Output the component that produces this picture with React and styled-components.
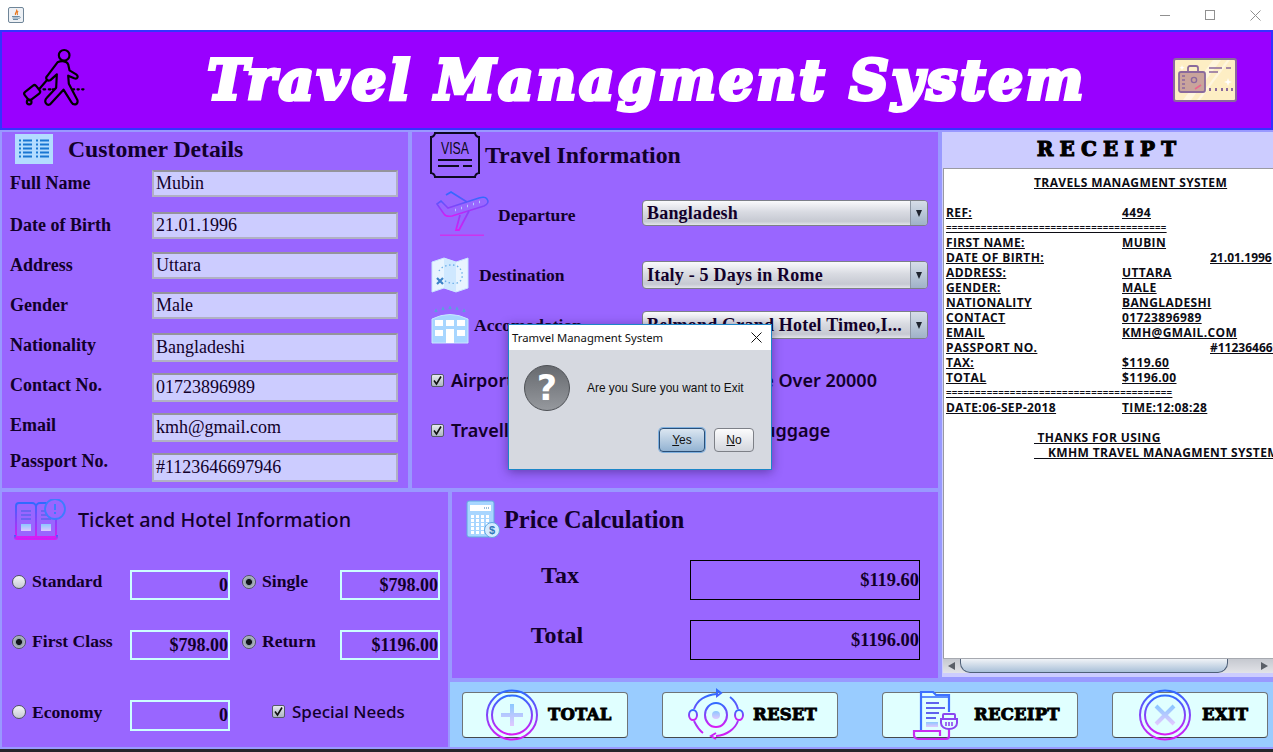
import React from 'react';
import styled, { createGlobalStyle } from 'styled-components';

const GlobalStyle = createGlobalStyle`
  html, body { margin: 0; padding: 0; background: #26262b; }
  #root { width: 1273px; height: 752px; overflow: hidden; }
`;

const serif = `"Liberation Serif", "Times New Roman", serif`;
const sans = `"Noto Sans", "Open Sans", sans-serif`;

const Screen = styled.div`
  position: relative;
  width: 1273px;
  height: 752px;
  background: #26262b;
  overflow: hidden;
  color: #12002a;
`;

const TitleBar = styled.div`
  height: 30px;
  background: #fff;
  display: flex;
  align-items: center;
  padding-left: 8px;
  box-sizing: border-box;
`;

const WinControls = styled.div`
  margin-left: auto;
  display: flex;
  align-items: center;
  gap: 34px;
  padding-right: 12px;
`;

const Header = styled.div`
  height: 100px;
  box-sizing: border-box;
  background: #9900ff;
  border: 2px solid #3333ff;
  display: flex;
  align-items: center;
  padding: 0 34px 0 18px;
`;

const BigTitle = styled.div`
  flex: 1;
  text-align: center;
  font: italic 700 54px "DejaVu Serif", serif;
  letter-spacing: 3.3px;
  color: #fff;
  -webkit-text-stroke: 4px #fff;
  white-space: nowrap;
  padding: 0 0 0 34px;
`;

const Body = styled.div`
  display: grid;
  grid-template-columns: 410px 40px 490px 333px;
  grid-template-rows: 360px 190px 69px;
`;

const Panel = styled.section`
  box-sizing: border-box;
  background: #9966ff;
  border: 2px solid #9999ff;
  grid-column: ${p => p.$col};
  grid-row: ${p => p.$row};
  min-width: 0;
`;

const Row = styled.div`
  display: flex;
  align-items: center;
  box-sizing: border-box;
  height: ${p => p.$h}px;
  margin-top: ${p => p.$top || 0}px;
  padding-left: ${p => p.$left || 0}px;
  padding-bottom: ${p => p.$bottom || 0}px;
`;

const SectionTitle = styled.h2`
  margin: 0 0 0 ${p => p.$gap || 0}px;
  font: 700 ${p => p.$size || 24}px ${serif};
  color: #12002a;
  white-space: nowrap;
`;

const SansTitle = styled.h2`
  margin: 0 0 2px 10px;
  font: 500 19.8px ${sans};
  color: #12002a;
  white-space: nowrap;
`;

const FieldLabel = styled.div`
  width: 142px;
  flex: none;
  font: 700 18px ${serif};
  padding-bottom: ${p => p.$lift || 0}px;
  white-space: nowrap;
`;

const FieldValue = styled.div`
  width: 246px;
  height: ${p => p.$h}px;
  box-sizing: border-box;
  background: #ccccff;
  border: 2px solid #b0b0c4;
  border-top-color: #94949c;
  font: 400 18px ${serif};
  line-height: ${p => p.$h - 4}px;
  padding-left: 2px;
  color: #12002a;
  white-space: nowrap;
`;

const TravelLabel = styled.div`
  font: 700 17.5px ${serif};
  margin-left: ${p => p.$gap}px;
  width: ${p => p.$w}px;
  flex: none;
  white-space: nowrap;
`;

const Select = styled.div`
  width: 286px;
  height: ${p => p.$h}px;
  margin-bottom: ${p => p.$lift || 0}px;
  box-sizing: border-box;
  border: 1px solid #7c7f88;
  border-radius: 4px;
  background: linear-gradient(#fafafc 0%, #d9dbe2 45%, #c6c9d2 85%, #e2e4ea 100%);
  display: flex;
  align-items: center;
  overflow: hidden;
  flex: none;
`;

const SelectText = styled.div`
  flex: 1;
  font: 700 18px ${serif};
  letter-spacing: 0.2px;
  padding-left: 4px;
  white-space: nowrap;
  color: #12002a;
`;

const SelectArrow = styled.div`
  width: 16px;
  align-self: stretch;
  background: linear-gradient(#d6dde8, #9fb2c8);
  border-left: 1px solid #8d97a6;
  display: flex;
  align-items: center;
  justify-content: center;
  &::after {
    content: '';
    border-left: 3.5px solid transparent;
    border-right: 3.5px solid transparent;
    border-top: 7px solid #1e2430;
  }
`;

const CheckRow = styled.div`
  display: grid;
  grid-template-columns: 253px auto;
  align-items: center;
  height: 20px;
  margin-top: ${p => p.$top}px;
  padding-left: 19px;
`;

const CheckItem = styled.label`
  display: flex;
  align-items: center;
  gap: 7px;
  font: 600 18px ${sans};
  color: #12002a;
  white-space: nowrap;
`;

const CheckBox = styled.span`
  width: 13px;
  height: 13px;
  box-sizing: border-box;
  border: 1px solid #555c68;
  border-radius: 2px;
  background: linear-gradient(#e6e9ef, #aeb6c3);
  display: flex;
  align-items: center;
  justify-content: center;
  flex: none;
`;

const TicketHead = styled.div`
  display: flex;
  align-items: center;
  height: 40px;
  margin-top: 8px;
  padding-left: 12px;
`;

const TicketRow = styled.div`
  display: grid;
  grid-template-columns: 118px 100px 12px 98px 100px;
  height: 30px;
  margin-top: ${p => p.$top}px;
  padding-left: 10px;
`;

const RadioItem = styled.div`
  display: flex;
  align-items: center;
  gap: 6px;
  font: 700 17.6px ${serif};
  padding-bottom: 7px;
  padding-left: ${p => p.$indent || 0}px;
  white-space: nowrap;
  grid-column: ${p => p.$col};
`;

const Radio = styled.span`
  width: 14px;
  height: 14px;
  box-sizing: border-box;
  border-radius: 50%;
  border: 1px solid #4e5560;
  background: ${p => (p.$on ? 'radial-gradient(circle, #10131a 0 2.6px, #8f99a8 3.4px, #dfe3ea 100%)' : 'linear-gradient(#f4f5f8, #c6cad2)')};
  flex: none;
`;

const AmountBox = styled.div`
  box-sizing: border-box;
  border: 2px solid #ccffff;
  font: 700 18px ${serif};
  text-align: right;
  padding-top: 3px;
  line-height: 21px;
  grid-column: ${p => p.$col};
  white-space: nowrap;
`;

const NeedsCell = styled.div`
  grid-column: 3 / 6;
  display: flex;
  align-items: center;
  padding-left: 42px;
  padding-bottom: 8px;
`;

const NeedsText = styled(CheckItem)`
  font-size: 17px;
  font-weight: 500;
`;

const PriceRow = styled.div`
  display: flex;
  height: 40px;
  margin-top: ${p => p.$top}px;
`;

const PriceLabel = styled.div`
  width: ${p => p.$w}px;
  flex: none;
  text-align: center;
  font: 700 24px ${serif};
  padding-bottom: 10px;
  line-height: 30px;
`;

const PriceBox = styled.div`
  width: 230px;
  box-sizing: border-box;
  border: 1px solid #000;
  font: 700 18.4px ${serif};
  text-align: right;
  line-height: 38px;
  margin-left: ${p => p.$gap}px;
`;

const ReceiptPanel = styled(Panel)`
  border-right: 0;
  border-bottom: 3px solid #9999ff;
  background: #ccccff;
  display: flex;
  flex-direction: column;
`;

const ReceiptHead = styled.div`
  height: 36px;
  box-sizing: border-box;
  flex: none;
  display: flex;
  align-items: center;
  justify-content: center;
  font: 900 20px "DejaVu Serif", serif;
  letter-spacing: 6.2px;
  color: #000;
  -webkit-text-stroke: 1.1px #000;
  padding: 0 0 3px 4px;
`;

const ReceiptPaper = styled.div`
  flex: 1;
  min-height: 0;
  margin-left: 1px;
  background: #fff;
  border-top: 1px solid #9a9aa2;
  border-left: 1px solid #9a9aa2;
  padding: 6px 0 0 2px;
  overflow: hidden;
  font: 700 12px/15px "Open Sans", sans-serif;
  letter-spacing: 0.38px;
  color: #0c0c14;
`;

const ReceiptLine = styled.div`
  display: flex;
  height: 15px;
  white-space: pre;
`;

const ReceiptCell = styled.span`
  flex: none;
  width: ${p => p.$w || 'auto'};
  margin-left: ${p => p.$gap || 0}px;
  & > u {
    text-decoration: underline;
    text-decoration-thickness: 1px;
    text-underline-offset: 1px;
  }
`;

const ReceiptRule = styled(ReceiptCell)`
  font-size: 9.6px;
  letter-spacing: 0.32px;
`;

const ReceiptFar = styled(ReceiptCell)`
  letter-spacing: 0;
`;

const ScrollBar = styled.div`
  height: 15px;
  margin: 0 0 4px 1px;
  flex: none;
  display: flex;
  align-items: center;
  background: linear-gradient(#c6c9d0, #e2e3e8);
  border-top: 1px solid #a6a9b0;
  box-sizing: border-box;
`;

const ScrollArrow = styled.span`
  width: 17px;
  flex: none;
  display: flex;
  justify-content: center;
  margin-left: ${p => (p.$right ? 'auto' : '0')};
  &::after {
    content: '';
    border-top: 4px solid transparent;
    border-bottom: 4px solid transparent;
    ${p => (p.$right ? 'border-left: 7px solid #5a5f68;' : 'border-right: 7px solid #5a5f68;')}
  }
`;

const ScrollThumb = styled.div`
  width: 268px;
  height: 14px;
  box-sizing: border-box;
  border: 1px solid #4f6078;
  border-top: 0;
  border-radius: 0 0 10px 10px;
  background: linear-gradient(#f0f3f7, #a9c0d8);
`;

const ButtonBar = styled.div`
  grid-column: 3 / 5;
  grid-row: 3;
  box-sizing: border-box;
  background: #99ccff;
  border-top: 2px solid #9999ff;
  border-bottom: 2px solid #9999ff;
  display: flex;
  align-items: center;
  padding: 0 0 0 12px;
`;

const ActionButton = styled.button`
  width: ${p => p.$w}px;
  height: 46px;
  margin-left: ${p => p.$gap || 0}px;
  padding: 0 0 0 ${p => p.$pad}px;
  box-sizing: border-box;
  background: #e0ffff;
  border: 1px solid #6e7478;
  border-bottom-color: #44484c;
  border-radius: 4px;
  display: flex;
  align-items: center;
  gap: ${p => p.$iconGap}px;
  font: 900 16.5px "DejaVu Serif", serif;
  letter-spacing: 0.2px;
  color: #000;
  -webkit-text-stroke: 0.9px #000;
  flex: none;
`;

const ButtonIcon = styled.svg`
  flex: none;
  margin: -2px 0;
  overflow: visible;
`;

const TravellerSvg = styled.svg`
  flex: none;
  margin-bottom: 6px;
`;

const Dialog = styled.div`
  position: absolute;
  left: 508px;
  top: 324px;
  width: 264px;
  height: 146px;
  box-sizing: border-box;
  border: 1px solid #1c86c8;
  background: #d6d9e0;
  box-shadow: 0 2px 10px rgba(30, 10, 70, 0.45);
  display: flex;
  flex-direction: column;
`;

const DialogTitle = styled.div`
  height: 25px;
  flex: none;
  background: #fff;
  display: flex;
  align-items: center;
  justify-content: space-between;
  padding: 0 9px 0 3px;
  font: 400 11.3px ${sans};
  color: #111;
  white-space: nowrap;
`;

const DialogBody = styled.div`
  display: flex;
  align-items: center;
  padding: 15px 0 0 15px;
  gap: 17px;
  font: 400 11.9px "Liberation Sans", Arial, sans-serif;
  color: #111;
`;

const DialogActions = styled.div`
  display: flex;
  justify-content: flex-end;
  gap: 9px;
  padding: 17px 17px 0 0;
`;

const DialogButton = styled.button`
  width: ${p => p.$w}px;
  height: 24px;
  box-sizing: border-box;
  padding: 0;
  border-radius: 4px;
  font: 400 12px "Liberation Sans", Arial, sans-serif;
  color: #111;
  border: 1px solid ${p => (p.$primary ? '#2a4f78' : '#7d8087')};
  background: ${p => (p.$primary ? 'linear-gradient(#dbe6f1, #93b3d2)' : 'linear-gradient(#fcfcfd, #d3d6dd)')};
  box-shadow: ${p => (p.$primary ? '0 0 0 1px #7fb0df' : 'none')};
  & > u { text-decoration: underline; }
`;

const Grad = ({ id }) => (
  <defs>
    <linearGradient id={id} x1="0" y1="0" x2="0" y2="1">
      <stop offset="0" stopColor="#2f6bff" />
      <stop offset="1" stopColor="#d81cf4" />
    </linearGradient>
    <linearGradient id={id + 'p'} x1="0" y1="0" x2="0" y2="1">
      <stop offset="0" stopColor="#8cc8ff" />
      <stop offset="1" stopColor="#e0c8ff" />
    </linearGradient>
  </defs>
);

const JavaIcon = () => (
  <svg width="16" height="16" viewBox="0 0 16 16">
    <rect x="0.5" y="0.5" width="15" height="15" rx="1.5" fill="#eef1f5" stroke="#6f8598" />
    <path d="M8.5 2.5C10 4.5 6.5 5.5 7.5 8M10 4C9 5.5 8.5 6.5 9.5 8" fill="none" stroke="#e8761c" strokeWidth="1.2" />
    <path d="M4 9.5h7M4.5 11h6M5 12.5h5" stroke="#5b7f9b" strokeWidth="0.9" />
    <path d="M11 9.5c2 0 1.5 2-.5 2" fill="none" stroke="#5b7f9b" strokeWidth="0.8" />
  </svg>
);

const WinMin = () => <svg width="11" height="11"><path d="M0 5.5h10" stroke="#909090" /></svg>;
const WinMax = () => <svg width="11" height="11"><rect x="0.5" y="0.5" width="9" height="9" fill="none" stroke="#909090" /></svg>;
const WinClose = () => <svg width="11" height="11"><path d="M0.5 0.5l10 10M10.5 0.5l-10 10" stroke="#909090" /></svg>;

const TravellerIcon = () => (
  <TravellerSvg width="67" height="60" viewBox="60 140 200 180" fill="none" stroke="#000" strokeWidth="6.5" strokeLinecap="round" strokeLinejoin="round">
    <circle cx="192" cy="165" r="16" />
    <path d="M172 186C185 180 200 182 204 192L208 210L228 222C236 228 232 238 222 234L204 226L206 250L232 300C234 314 220 316 214 306L190 268L150 312C138 318 130 302 140 292L168 262L170 222L150 240C140 244 134 232 142 226Z" />
    <path d="M118 265L140 240" />
    <rect x="74" y="262" width="44" height="30" rx="7" transform="rotate(-38 96 277)" />
    <circle cx="87" cy="305" r="7" />
    <path d="M130 267h5M146 267h5M158 267h3M218 267h4M232 267h4M246 267h4" />
  </TravellerSvg>
);

const CardIcon = () => (
  <svg width="64" height="44" viewBox="0 0 64 44">
    <rect x="1" y="1" width="62" height="42" rx="2" fill="#fdeec4" stroke="#8a6a9c" strokeWidth="2" />
    <path d="M10 42L40 2h8L18 42zM24 42L54 2h3L27 42z" fill="#fff6de" />
    <path d="M15 13v-3a2 2 0 012-2h6a2 2 0 012 2v3" fill="none" stroke="#8a6a9c" strokeWidth="1.8" />
    <rect x="6" y="14" width="26" height="20" rx="2" fill="#c9a49c" stroke="#8a6a9c" strokeWidth="1.8" />
    <path d="M9 18h3M9 22h3M9 26h3M9 30h3" stroke="#8a6a9c" strokeWidth="1.4" />
    <circle cx="21" cy="22" r="2.6" fill="none" stroke="#8a6a9c" strokeWidth="1.4" />
    <path d="M22 31l6-4" stroke="#e8688c" strokeWidth="1.6" />
    <path d="M36 10h13M36 14h9M53 10h5" stroke="#8a6a9c" strokeWidth="1.6" />
    <path d="M37 30v3M43 30v3M49 30v3M54 30v3M59 30v3" stroke="#8a6a9c" strokeWidth="2" />
    <path d="M55 20l1 3 3 1-3 1-1 3-1-3-3-1 3-1zM9 7l.7 2 2 .7-2 .7-.7 2-.7-2-2-.7 2-.7z" fill="#fff" />
  </svg>
);

const ListIcon = () => (
  <svg width="38" height="30" viewBox="0 0 38 30">
    <rect width="38" height="30" fill="#b3dcff" />
    {[6, 10, 14, 18, 22].map(y => (
      <g key={y} fill="#1976d2">
        <rect x="4" y={y - 0.5} width="2" height="2" />
        <rect x="8" y={y - 0.5} width="9" height="2" />
        <rect x="21" y={y - 0.5} width="2" height="2" />
        <rect x="25" y={y - 0.5} width="9" height="2" />
      </g>
    ))}
  </svg>
);

const VisaIcon = () => (
  <svg width="50" height="46" viewBox="0 0 50 46" fill="none" stroke="#0c0820" strokeWidth="2">
    <path d="M5 1h40c0 2 2 4 4 4v36c-2 0-4 2-4 4H5c0-2-2-4-4-4V5c2 0 4-2 4-4z" />
    <text x="25" y="22" textAnchor="middle" fontFamily="Liberation Sans, sans-serif" fontSize="16" fill="#0c0820" stroke="none" textLength="28" lengthAdjust="spacingAndGlyphs">VISA</text>
    <path d="M8 28h34M8 34h21M33 34h9" />
  </svg>
);

const PlaneIcon = () => (
  <svg width="56" height="50" viewBox="0 0 56 50" fill="none">
    <Grad id="pl" />
    <path d="M3 14L10 24Q12 27 18 26L50 16Q56 13 53 9Q51 6 45 8L14 18L7 11Z" stroke="url(#pl)" strokeWidth="1.6" />
    <path d="M12 5L17 2L33 12M26 25L22 40L25 40L35 21" stroke="url(#pl)" strokeWidth="1.8" />
    <path d="M21 20h1M27 18h1M33 16h1M39 14h1M45 12h1" stroke="#b8c8ff" strokeWidth="2.4" />
    <rect x="6" y="44.5" width="44" height="1.5" fill="#cc33ee" />
  </svg>
);

const MapIcon = () => (
  <svg width="38" height="36" viewBox="0 0 38 36">
    <path d="M1 5L13 1L25 5L37 1V31L25 35L13 31L1 35Z" fill="#e8f4ff" stroke="#c8e4ff" />
    <path d="M13 1L25 5V35L13 31Z" fill="#cfe8ff" />
    <path d="M8 14C10 10 18 6 26 9C33 13 33 24 26 26C22 27 18 26 14 24" fill="none" stroke="#6fb0e8" strokeWidth="1.4" strokeDasharray="1.5 2.5" />
    <path d="M6 21l6 6M12 21l-6 6" stroke="#3c82c8" strokeWidth="2.2" />
  </svg>
);

const HotelIcon = () => (
  <svg width="38" height="38" viewBox="0 0 38 38">
    <path d="M4 6l1-2 1 2M11 4l1-2 1 2M18 3l1-2 1 2M25 4l1-2 1 2M32 6l1-2 1 2" fill="none" stroke="#5aa0dc" strokeWidth="1.6" />
    <path d="M1 13Q19 4 37 13V37H1Z" fill="#a8d6ff" stroke="#c8e6ff" />
    <g fill="#fff">
      <rect x="4" y="14" width="8" height="6" /><rect x="15" y="14" width="8" height="6" /><rect x="26" y="14" width="8" height="6" />
      <rect x="4" y="24" width="8" height="6" /><rect x="26" y="24" width="8" height="6" />
      <rect x="15" y="23" width="8" height="14" />
    </g>
  </svg>
);

const BookIcon = () => (
  <svg width="54" height="42" viewBox="0 0 54 42" fill="none">
    <Grad id="bk" />
    <path d="M2 7a3 3 0 013-3h13a4 4 0 014 4v30H2zM22 8a4 4 0 014-4h6l10 8 0 26H22z" stroke="url(#bk)" strokeWidth="2" />
    <path d="M1 36v2a2 2 0 002 2h38a2 2 0 002-2v-2" stroke="url(#bk)" strokeWidth="2" />
    <path d="M7 12h10M7 16h10M7 20h10M27 12h8M27 16h10M27 20h10" stroke="#5e62ee" strokeWidth="1.6" />
    <rect x="7" y="25" width="10" height="7" fill="url(#bkp)" />
    <rect x="27" y="25" width="10" height="7" fill="url(#bkp)" />
    <circle cx="41" cy="10" r="10" fill="#9966ff" stroke="#3d7cff" strokeWidth="1.8" />
    <path d="M41 5v6M41 13v2" stroke="#3d7cff" strokeWidth="2" />
  </svg>
);

const CalcIcon = () => (
  <svg width="36" height="40" viewBox="0 0 36 40">
    <rect x="1" y="1" width="27" height="36" rx="2" fill="#a8d6ff" stroke="#62a8e0" />
    <rect x="4" y="5" width="21" height="6" fill="#fff" />
    <path d="M18 8h1M20 8h1M22 8h1" stroke="#3478b8" />
    {[15, 19, 23, 27, 31].map(y => (
      <g key={y} fill="#fff">
        <rect x="5" y={y} width="3" height="3" /><rect x="10" y={y} width="3" height="3" /><rect x="15" y={y} width="3" height="3" /><rect x="20" y={y} width="3" height="3" />
      </g>
    ))}
    <circle cx="26" cy="30" r="7.5" fill="#d6ecff" stroke="#62a8e0" />
    <text x="26" y="34" textAnchor="middle" fontFamily="Liberation Sans, sans-serif" fontSize="11" fontWeight="700" fill="#3478b8">$</text>
  </svg>
);

const QuestionBadge = () => (
  <svg width="46" height="46" viewBox="0 0 46 46">
    <defs>
      <linearGradient id="qb" x1="0" y1="0" x2="0" y2="1">
        <stop offset="0" stopColor="#66696e" />
        <stop offset="1" stopColor="#96999e" />
      </linearGradient>
    </defs>
    <circle cx="23" cy="23" r="22.5" fill="url(#qb)" stroke="#4e5156" />
    <text x="23" y="35" textAnchor="middle" fontFamily="DejaVu Sans, sans-serif" fontSize="35" fontWeight="700" fill="#fff">?</text>
  </svg>
);

const RingIcon = ({ id, children }) => (
  <ButtonIcon width="52" height="50" viewBox="0 0 52 50" fill="none">
    <Grad id={id} />
    <ellipse cx="26" cy="25" rx="25" ry="24.5" stroke={`url(#${id})`} strokeWidth="2" />
    <ellipse cx="26" cy="25" rx="20" ry="19.5" stroke={`url(#${id})`} strokeWidth="2" />
    {children(id)}
  </ButtonIcon>
);

const ResetIcon = () => (
  <ButtonIcon width="56" height="50" viewBox="0 0 56 50" fill="none">
    <Grad id="rs" />
    <ellipse cx="28" cy="25" rx="11" ry="12" stroke="url(#rs)" strokeWidth="2" />
    <circle cx="28" cy="25" r="4" fill="url(#rsp)" />
    <ellipse cx="5" cy="25" rx="4" ry="5" stroke="url(#rs)" strokeWidth="2" />
    <ellipse cx="51" cy="25" rx="4" ry="5" stroke="url(#rs)" strokeWidth="2" />
    <path d="M6 19C9 11 17 5 29 4M50 19C49 15 46 10 42 7M50 31C47 39 39 45 28 46M6 31C8 35 11 40 15 43" stroke="url(#rs)" strokeWidth="2" />
    <path d="M29 0L33 3L29 6V0ZM28 43L23 46L28 49" stroke="url(#rs)" strokeWidth="2" />
  </ButtonIcon>
);

const ReceiptIcon = () => (
  <ButtonIcon width="50" height="50" viewBox="0 0 50 50" fill="none">
    <Grad id="rc" />
    <path d="M8 40V2H20L23 5H36V22" stroke="#3d70ff" strokeWidth="2.2" />
    <path d="M8 7H36" stroke="#3d70ff" strokeWidth="1.6" />
    <path d="M13 13H26M13 18H32M13 23H26M13 28H23" stroke="#5e62ee" strokeWidth="1.8" />
    <rect x="13" y="32" width="12" height="5" fill="url(#rcp)" />
    <path d="M36 38V46A3 3 0 0133 49H5A4 4 0 011 45V41H27V46" stroke="#c92cf0" strokeWidth="2.2" />
    <path d="M30 29V25A1 1 0 0131 24H41A1 1 0 0142 25V29H44V33C44 37 40 39 36 39C32 39 28 37 28 33V29H44" stroke="#8c46f0" strokeWidth="2" />
    <path d="M33 32V36M36 32V36M39 32V36" stroke="#8c46f0" strokeWidth="1.6" />
  </ButtonIcon>
);

const Tick = () => (
  <svg width="11" height="11" viewBox="0 0 11 11"><path d="M2 5.5l2.5 3.5L9 1.5" fill="none" stroke="#111" strokeWidth="1.6" /></svg>
);

const customerFields = [
  { label: 'Full Name', value: 'Mubin', h: 27, top: 0 },
  { label: 'Date of Birth', value: '21.01.1996', h: 27, top: 15 },
  { label: 'Address', value: 'Uttara', h: 27, top: 13 },
  { label: 'Gender', value: 'Male', h: 27, top: 13 },
  { label: 'Nationality', value: 'Bangladeshi', h: 29, top: 14, lift: 4 },
  { label: 'Contact No.', value: '01723896989', h: 29, top: 11, lift: 4 },
  { label: 'Email', value: 'kmh@gmail.com', h: 29, top: 11, lift: 4 },
  { label: 'Passport No.', value: '#1123646697946', h: 29, top: 11, lift: 12 }
];

const receiptRows = [
  { left: '' },
  { left: 'REF:', right: '4494' },
  { left: '======================================', rule: true },
  { left: 'FIRST NAME:', right: 'MUBIN' },
  { left: 'DATE OF BIRTH:', far: '21.01.1996' },
  { left: 'ADDRESS:', right: 'UTTARA' },
  { left: 'GENDER:', right: 'MALE' },
  { left: 'NATIONALITY', right: 'BANGLADESHI' },
  { left: 'CONTACT', right: '01723896989' },
  { left: 'EMAIL', right: 'KMH@GMAIL.COM' },
  { left: 'PASSPORT NO.', far: '#1123646697946' },
  { left: 'TAX:', right: '$119.60' },
  { left: 'TOTAL', right: '$1196.00' },
  { left: '=======================================', rule: true },
  { left: 'DATE:06-SEP-2018', right: 'TIME:12:08:28' }
];

function App() {
  return (
    <Screen>
      <GlobalStyle />
      <TitleBar>
        <JavaIcon />
        <WinControls>
          <WinMin />
          <WinMax />
          <WinClose />
        </WinControls>
      </TitleBar>

      <Header>
        <TravellerIcon />
        <BigTitle>Travel Managment System</BigTitle>
        <CardIcon />
      </Header>

      <Body>
        <Panel $col="1" $row="1">
          <Row $h={38} $left={13} $bottom={4}>
            <ListIcon />
            <SectionTitle $gap={15} $size={23.7}>Customer Details</SectionTitle>
          </Row>
          {customerFields.map(f => (
            <Row key={f.label} $h={f.h} $top={f.top} $left={8}>
              <FieldLabel $lift={f.lift}>{f.label}</FieldLabel>
              <FieldValue $h={f.h}>{f.value}</FieldValue>
            </Row>
          ))}
        </Panel>

        <Panel $col="2 / 4" $row="1">
          <Row $h={46} $left={18}>
            <VisaIcon />
            <SectionTitle $gap={5} $size={23.8}>Travel Information</SectionTitle>
          </Row>
          <Row $h={50} $top={12} $left={22}>
            <PlaneIcon />
            <TravelLabel $gap={8} $w={144}>Departure</TravelLabel>
            <Select $h={26} $lift={4}><SelectText>Bangladesh</SelectText><SelectArrow /></Select>
          </Row>
          <Row $h={36} $top={17} $left={19}>
            <MapIcon />
            <TravelLabel $gap={10} $w={163}>Destination</TravelLabel>
            <Select $h={28}><SelectText>Italy - 5 Days in Rome</SelectText><SelectArrow /></Select>
          </Row>
          <Row $h={38} $top={13} $left={19}>
            <HotelIcon />
            <TravelLabel $gap={5} $w={168}>Accomodation</TravelLabel>
            <Select $h={28}><SelectText>Belmond Grand Hotel Timeo,I...</SelectText><SelectArrow /></Select>
          </Row>
          <CheckRow $top={24}>
            <CheckItem><CheckBox><Tick /></CheckBox>Airport Tax</CheckItem>
            <CheckItem><CheckBox><Tick /></CheckBox>Mileage Over 20000</CheckItem>
          </CheckRow>
          <CheckRow $top={30}>
            <CheckItem><CheckBox><Tick /></CheckBox>Travelling Insurance</CheckItem>
            <CheckItem><CheckBox><Tick /></CheckBox>Extra Luggage</CheckItem>
          </CheckRow>
        </Panel>

        <ReceiptPanel $col="4" $row="1 / 3">
          <ReceiptHead>RECEIPT</ReceiptHead>
          <ReceiptPaper>
            <ReceiptLine><ReceiptCell $gap={88}><u>TRAVELS MANAGMENT SYSTEM</u></ReceiptCell></ReceiptLine>
            {receiptRows.map((r, i) => (
              <ReceiptLine key={i}>
                {r.rule
                  ? <ReceiptRule $w="176px"><u>{r.left}</u></ReceiptRule>
                  : <ReceiptCell $w="176px"><u>{r.left}</u></ReceiptCell>}
                {r.right && <ReceiptCell><u>{r.right}</u></ReceiptCell>}
                {r.far && <ReceiptFar $gap={88}><u>{r.far}</u></ReceiptFar>}
              </ReceiptLine>
            ))}
            <ReceiptLine />
            <ReceiptLine><ReceiptCell $gap={88}><u>{' THANKS FOR USING'}</u></ReceiptCell></ReceiptLine>
            <ReceiptLine><ReceiptCell $gap={88}><u>{'    KMHM TRAVEL MANAGMENT SYSTEM'}</u></ReceiptCell></ReceiptLine>
          </ReceiptPaper>
          <ScrollBar>
            <ScrollArrow />
            <ScrollThumb />
            <ScrollArrow $right />
          </ScrollBar>
        </ReceiptPanel>

        <Panel $col="1 / 3" $row="2 / 4">
          <TicketHead>
            <BookIcon />
            <SansTitle>Ticket and Hotel Information</SansTitle>
          </TicketHead>
          <TicketRow $top={30}>
            <RadioItem><Radio />Standard</RadioItem>
            <AmountBox>0</AmountBox>
            <RadioItem $col="3 / 5" $indent={12}><Radio $on />Single</RadioItem>
            <AmountBox $col="5">$798.00</AmountBox>
          </TicketRow>
          <TicketRow $top={30}>
            <RadioItem><Radio $on />First Class</RadioItem>
            <AmountBox>$798.00</AmountBox>
            <RadioItem $col="3 / 5" $indent={12}><Radio $on />Return</RadioItem>
            <AmountBox $col="5">$1196.00</AmountBox>
          </TicketRow>
          <TicketRow $top={40}>
            <RadioItem><Radio />Economy</RadioItem>
            <AmountBox>0</AmountBox>
            <NeedsCell><NeedsText><CheckBox><Tick /></CheckBox>Special Needs</NeedsText></NeedsCell>
          </TicketRow>
        </Panel>

        <Panel $col="3" $row="2">
          <Row $h={40} $top={8} $left={14}>
            <CalcIcon />
            <SectionTitle $gap={2} $size={24.3}>Price Calculation</SectionTitle>
          </Row>
          <PriceRow $top={20}>
            <PriceLabel $w={216}>Tax</PriceLabel>
            <PriceBox $gap={22}>$119.60</PriceBox>
          </PriceRow>
          <PriceRow $top={20}>
            <PriceLabel $w={210}>Total</PriceLabel>
            <PriceBox $gap={28}>$1196.00</PriceBox>
          </PriceRow>
        </Panel>

        <ButtonBar>
          <ActionButton $w={166} $pad={23} $iconGap={10}>
            <RingIcon id="tt">{id => <path d="M26 14V36M15 25H37" stroke={`url(#${id}p)`} strokeWidth="4" />}</RingIcon>
            TOTAL
          </ActionButton>
          <ActionButton $w={176} $gap={34} $pad={25} $iconGap={9}>
            <ResetIcon />
            RESET
          </ActionButton>
          <ActionButton $w={196} $gap={44} $pad={30} $iconGap={11}>
            <ReceiptIcon />
            RECEIPT
          </ActionButton>
          <ActionButton $w={156} $gap={34} $pad={26} $iconGap={11}>
            <RingIcon id="ex">{id => <path d="M17 16L35 34M35 16L17 34" stroke={`url(#${id}p)`} strokeWidth="4" />}</RingIcon>
            EXIT
          </ActionButton>
        </ButtonBar>
      </Body>

      <Dialog>
        <DialogTitle>
          Tramvel Managment System
          <svg width="11" height="11"><path d="M0.5 0.5l10 10M10.5 0.5l-10 10" stroke="#111" /></svg>
        </DialogTitle>
        <DialogBody>
          <QuestionBadge />
          Are you Sure you want to Exit
        </DialogBody>
        <DialogActions>
          <DialogButton $w={46} $primary><u>Y</u>es</DialogButton>
          <DialogButton $w={40}><u>N</u>o</DialogButton>
        </DialogActions>
      </Dialog>
    </Screen>
  );
}

export default App;
